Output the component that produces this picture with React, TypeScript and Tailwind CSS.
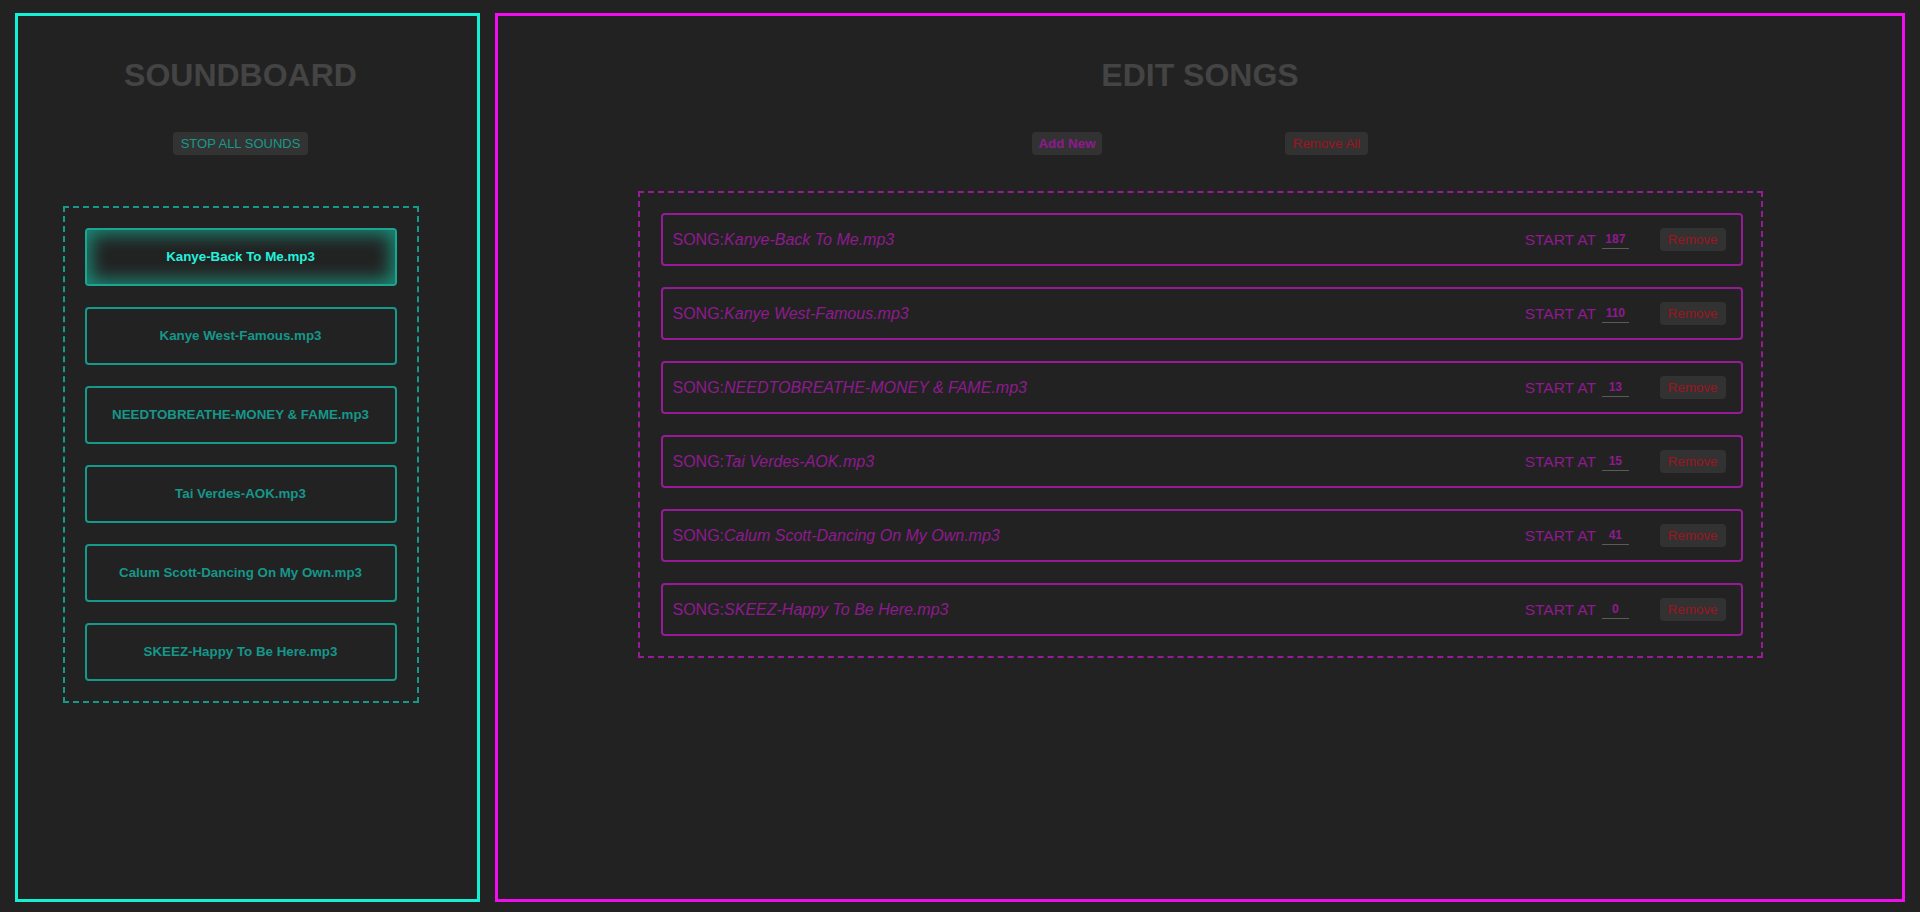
import React from "react";

type Song = {
  name: string;
  start: number;
};

const songs: Song[] = [
  { name: "Kanye-Back To Me.mp3", start: 187 },
  { name: "Kanye West-Famous.mp3", start: 110 },
  { name: "NEEDTOBREATHE-MONEY & FAME.mp3", start: 13 },
  { name: "Tai Verdes-AOK.mp3", start: 15 },
  { name: "Calum Scott-Dancing On My Own.mp3", start: 41 },
  { name: "SKEEZ-Happy To Be Here.mp3", start: 0 },
];

const SoundButton = ({ song, active }: { song: Song; active: boolean }) => (
  <button
    type="button"
    className={
      active
        ? "h-[58px] w-full rounded-[4px] border-2 border-[#1aa792] text-[13.33px] font-bold text-[#22f3df] shadow-[inset_0_0_18px_4px_rgba(26,175,150,0.75)]"
        : "h-[58px] w-full rounded-[4px] border-2 border-[#14998a] text-[13.33px] font-bold text-[#15978a]"
    }
  >
    {song.name}
  </button>
);

const SongRow = ({ song }: { song: Song }) => (
  <div className="flex h-[53px] items-center rounded-[4px] border-2 border-[#971b97] pl-[10px] pr-[15px] text-[#8f1a8f]">
    <span className="text-[16px]">
      SONG:<i>{song.name}</i>
    </span>
    <span className="ml-auto text-[15.5px]">START AT</span>
    <input
      readOnly
      value={song.start}
      className="ml-[6px] h-[18px] w-[27px] border-b border-[#5a5a5a] bg-transparent text-center text-[12px] font-bold text-[#8f1a8f] outline-none"
    />
    <button
      type="button"
      className="ml-[31px] h-[23px] rounded-[4px] bg-[#323232] px-2 text-[13.33px] text-[#9c1520]"
    >
      Remove
    </button>
  </div>
);

export default function App() {
  return (
    <div className="flex h-[912px] w-[1920px] gap-[15px] bg-[#222222] px-[15px] pb-[10px] pt-[13px] font-['Liberation_Sans',Arial,sans-serif]">
      <section className="flex w-[465px] flex-col items-center border-[3px] border-[#14f0d4] pr-[14px] pt-[41px]">
        <h1 className="text-[32px] font-bold leading-[37px] text-[#444444]">
          SOUNDBOARD
        </h1>
        <button
          type="button"
          className="mt-[38px] h-[23px] rounded-[4px] bg-[#333333] px-2 text-[13px] text-[#18998a]"
        >
          STOP ALL SOUNDS
        </button>
        <div className="mt-[51px] flex w-[356px] flex-col gap-[21px] border-2 border-dashed border-[#14998a] p-[20px]">
          {songs.map((song, i) => (
            <SoundButton key={song.name} song={song} active={i === 0} />
          ))}
        </div>
      </section>

      <section className="flex flex-1 flex-col items-center border-[3px] border-[#f30cf0] pt-[41px]">
        <h1 className="text-[32px] font-bold leading-[37px] text-[#444444]">
          EDIT SONGS
        </h1>
        <div className="mt-[38px] flex gap-[183px]">
          <button
            type="button"
            className="h-[23px] w-[70px] rounded-[4px] bg-[#323232] text-[13.33px] font-bold text-[#8f1a8f]"
          >
            Add New
          </button>
          <button
            type="button"
            className="h-[23px] w-[83px] rounded-[4px] bg-[#323232] text-[13.33px] text-[#9c1520]"
          >
            Remove All
          </button>
        </div>
        <div className="mt-[36px] flex w-[1125px] flex-col gap-[21px] border-2 border-dashed border-[#971b97] py-[20px] pl-[21px] pr-[18px]">
          {songs.map((song) => (
            <SongRow key={song.name} song={song} />
          ))}
        </div>
      </section>
    </div>
  );
}
